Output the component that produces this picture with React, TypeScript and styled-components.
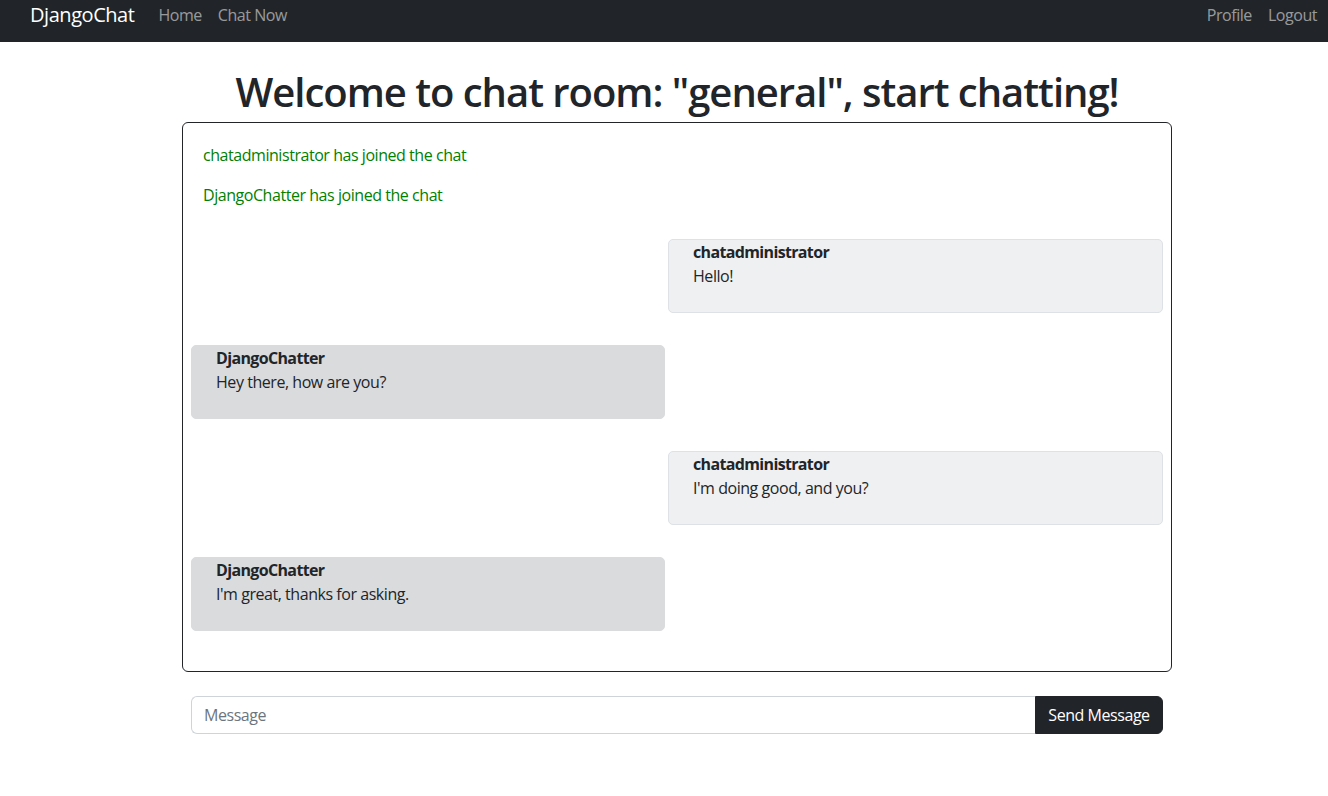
import React from "react";
import styled, { createGlobalStyle } from "styled-components";

const Global = createGlobalStyle`
  html, body { margin: 0; padding: 0; background: #fff; }
  body {
    font-family: "Open Sans", "Noto Sans", sans-serif;
    font-size: 16px;
    line-height: 1.5;
    color: #212529;
    letter-spacing: -0.45px;
  }
  * { box-sizing: border-box; }
`;

const Navbar = styled.nav`
  height: 42px;
  background: #212529;
  display: flex;
  align-items: flex-start;
  padding: 0 3px 0 30px;
`;

const Brand = styled.a`
  font-size: 20px;
  line-height: 30px;
  color: #fff;
  text-decoration: none;
  margin-right: 16px;
`;

const NavList = styled.div<{ $end?: boolean }>`
  display: flex;
  margin-left: ${(p) => (p.$end ? "auto" : "0")};
`;

const NavLink = styled.a`
  font-size: 16px;
  line-height: 30px;
  padding: 0 8px;
  color: rgba(255, 255, 255, 0.55);
  text-decoration: none;
`;

const Main = styled.main`
  width: 990px;
  margin-left: 182px;
  display: flex;
  flex-direction: column;
`;

const Title = styled.h1`
  margin: 26px 0 6px;
  font-size: 40px;
  font-weight: 600;
  line-height: 48px;
  letter-spacing: -1.02px;
  text-align: center;
  color: #212529;
`;

const ChatBox = styled.section`
  border: 1px solid #212529;
  border-radius: 6px;
  padding: 20px 8px 40px;
  display: flex;
  flex-direction: column;
  gap: 16px;
`;

const SystemLine = styled.p`
  margin: 0;
  padding-left: 12px;
  color: #008000;
  line-height: 24px;
`;

const BubbleRow = styled.div<{ $mine?: boolean }>`
  display: flex;
  justify-content: ${(p) => (p.$mine ? "flex-end" : "flex-start")};
  margin-top: 16px;
`;

const Bubble = styled.div<{ $mine?: boolean }>`
  width: ${(p) => (p.$mine ? "495px" : "474px")};
  height: 74px;
  padding: 0 24px;
  border: 1px solid ${(p) => (p.$mine ? "#dee1e5" : "#dadbdd")};
  background: ${(p) => (p.$mine ? "#eff0f2" : "#dadbdd")};
  border-radius: 5px;
`;

const Author = styled.div`
  font-weight: 700;
  line-height: 24px;
  letter-spacing: -0.65px;
  color: #212529;
`;

const Text = styled.div`
  line-height: 24px;
  color: #212529;
`;

const InputGroup = styled.form`
  display: flex;
  margin: 24px 9px 0;
  height: 38px;
`;

const Input = styled.input`
  flex: 1;
  min-width: 0;
  border: 1px solid #ced4da;
  border-right: none;
  border-radius: 6px 0 0 6px;
  padding: 6px 12px;
  font: inherit;
  font-size: 16px;
  letter-spacing: -0.45px;
  color: #212529;
  outline: none;
  &::placeholder { color: #6c757d; }
`;

const SendButton = styled.button`
  width: 128px;
  border: 1px solid #212529;
  background: #212529;
  color: #fff;
  font: inherit;
  font-size: 16px;
  letter-spacing: -0.45px;
  border-radius: 0 6px 6px 0;
  padding: 0;
`;

const messages = [
  { author: "chatadministrator", text: "Hello!", mine: true },
  { author: "DjangoChatter", text: "Hey there, how are you?", mine: false },
  { author: "chatadministrator", text: "I'm doing good, and you?", mine: true },
  { author: "DjangoChatter", text: "I'm great, thanks for asking.", mine: false },
];

export default function App() {
  return (
    <>
      <Global />
      <Navbar>
        <Brand href="#">DjangoChat</Brand>
        <NavList>
          <NavLink href="#">Home</NavLink>
          <NavLink href="#">Chat Now</NavLink>
        </NavList>
        <NavList $end>
          <NavLink href="#">Profile</NavLink>
          <NavLink href="#">Logout</NavLink>
        </NavList>
      </Navbar>
      <Main>
        <Title>Welcome to chat room: "general", start chatting!</Title>
        <ChatBox>
          <SystemLine>chatadministrator has joined the chat</SystemLine>
          <SystemLine>DjangoChatter has joined the chat</SystemLine>
          {messages.map((m, i) => (
            <BubbleRow key={i} $mine={m.mine}>
              <Bubble $mine={m.mine}>
                <Author>{m.author}</Author>
                <Text>{m.text}</Text>
              </Bubble>
            </BubbleRow>
          ))}
        </ChatBox>
        <InputGroup onSubmit={(e) => e.preventDefault()}>
          <Input placeholder="Message" />
          <SendButton type="submit">Send Message</SendButton>
        </InputGroup>
      </Main>
    </>
  );
}
